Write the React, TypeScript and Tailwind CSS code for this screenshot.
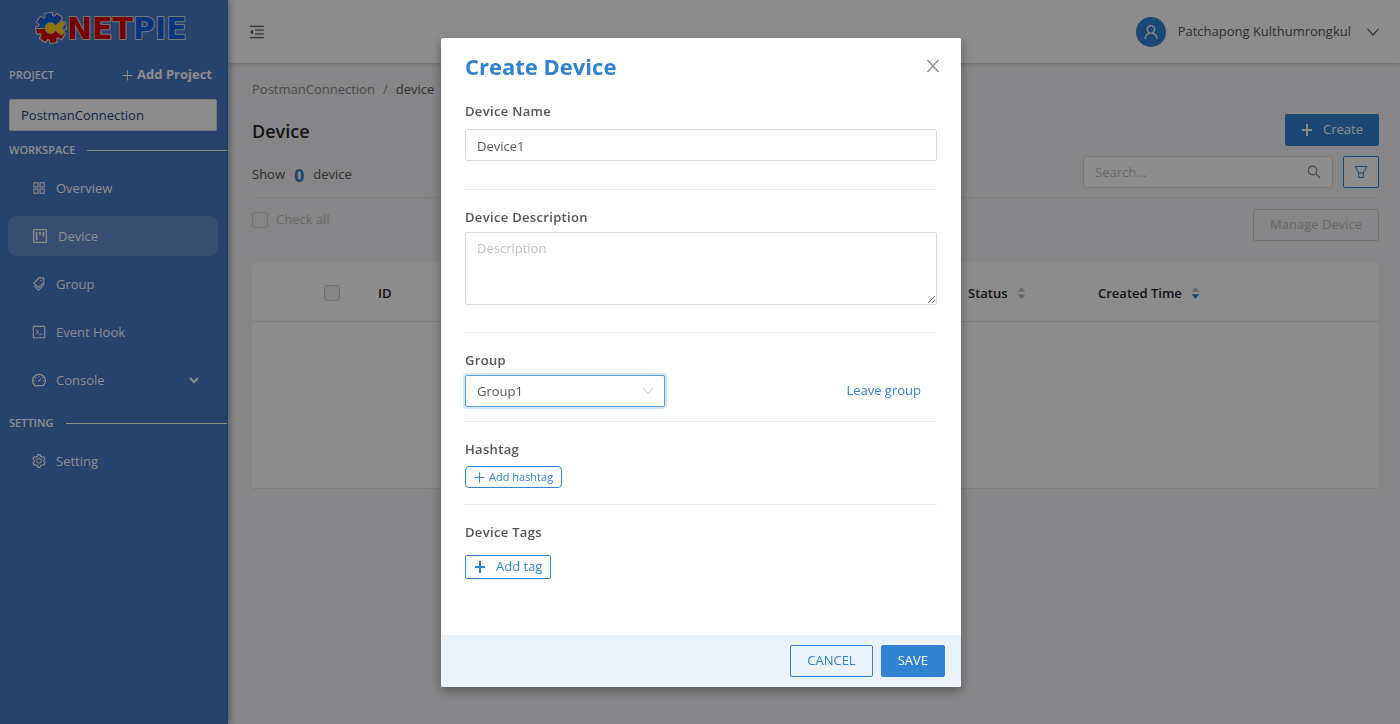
import React from "react";
import {
  AiOutlineAppstore,
  AiOutlineProject,
  AiOutlineTags,
  AiOutlineCode,
  AiOutlineDashboard,
  AiOutlineSetting,
  AiOutlineMenuFold,
  AiOutlineUser,
  AiFillCaretUp,
  AiFillCaretDown,
} from "react-icons/ai";

function BoldPlus() {
  return (
    <svg width="12" height="12" viewBox="0 0 12 12" fill="none" stroke="currentColor" strokeWidth="2" aria-hidden="true">
      <path d="M6 0v12M1 6h10" />
    </svg>
  );
}

function ThinPlus() {
  return (
    <svg width="11" height="11" viewBox="0 0 11 11" fill="none" stroke="currentColor" aria-hidden="true">
      <path d="M5.5 0.5v10M0.5 5.5h10" />
    </svg>
  );
}

function ChevronDown({ className }: { className?: string }) {
  return (
    <svg width="12" height="8" viewBox="0 0 12 8" fill="none" stroke="currentColor" strokeWidth="1.2" aria-hidden="true" className={className}>
      <path d="M0.5 0.8L6 7l5.5-6.2" />
    </svg>
  );
}

function CloseIcon() {
  return (
    <svg width="14" height="14" viewBox="0 0 14 14" fill="none" stroke="currentColor" strokeWidth="1.4" aria-hidden="true">
      <path d="M1.5 1l11 12M12.5 1l-11 12" />
    </svg>
  );
}

function SearchIcon() {
  return (
    <svg width="14" height="14" viewBox="0 0 14 14" fill="none" stroke="currentColor" strokeWidth="1.2" aria-hidden="true">
      <circle cx="5.5" cy="5.5" r="4.3" />
      <path d="M8.7 8.7L13 13" />
    </svg>
  );
}

function FilterIcon() {
  return (
    <svg width="14" height="14" viewBox="0 0 14 14" fill="none" stroke="currentColor" strokeLinejoin="round" aria-hidden="true">
      <path d="M1 1.5h12L9.3 8H4.7zM4.7 8v4.5h4.6V8" />
    </svg>
  );
}

const TEETH = 8;
const gearPath =
  Array.from({ length: TEETH }, (_, i) => {
    const at = (deg: number, r: number) => {
      const a = ((i * 360) / TEETH + deg - 10) * (Math.PI / 180);
      return `${(51 + r * Math.cos(a)).toFixed(2)} ${(28 + r * Math.sin(a)).toFixed(2)}`;
    };
    return `${i === 0 ? "M" : "L"}${at(-17, 11.5)}L${at(-12, 15)}L${at(12, 15)}L${at(17, 11.5)}`;
  }).join("") + "Z";

function Logo() {
  return (
    <svg width="160" height="36" viewBox="32 10 160 36" role="img" aria-label="NETPIE">
      <defs>
        <clipPath id="gear-top">
          <rect x="32" y="10" width="36" height="18" />
        </clipPath>
        <clipPath id="gear-shape">
          <path d={gearPath} />
        </clipPath>
      </defs>
      <path d={gearPath} fill="#d80000" stroke="#dcdcdc" strokeWidth="2.4" strokeLinejoin="round" />
      <path d={gearPath} fill="#d80000" />
      <path d={gearPath} fill="#0f62e0" clipPath="url(#gear-top)" />
      <path d="M36 28.5h8" stroke="#dcdcdc" strokeWidth="1.2" />
      <g clipPath="url(#gear-shape)">
        <path d="M56 28L62 22h6v12h-6z" fill="#4a78c8" />
      </g>
      <path
        d="M55.5 25.5L61 20.5l4 3-3 4.5 3 4.5-4 3-5.500-5a5.600 5.600 0 1 1 0-5z"
        fill="#ffd200"
        stroke="#dcdcdc"
        strokeWidth="0.6"
      />
      <text
        x="67"
        y="39"
        fontFamily="'DejaVu Sans', sans-serif"
        fontWeight="700"
        fontSize="30"
        stroke="#dcdcdc"
        strokeWidth="2"
        strokeLinejoin="round"
        paintOrder="stroke"
      >
        <tspan fill="#d80000">NET</tspan>
        <tspan fill="#0f62e0">PIE</tspan>
      </text>
    </svg>
  );
}

function SectionLabel({ children }: { children: string }) {
  return (
    <div className="flex h-5 items-center gap-3 pr-px pl-[9px] text-[11px] font-semibold text-white">
      <span>{children}</span>
      <span className="h-px flex-1 bg-white" />
    </div>
  );
}

type NavProps = { icon: React.ReactNode; label: string; active?: boolean; expandable?: boolean };

function NavItem({ icon, label, active, expandable }: NavProps) {
  return (
    <a
      href="#"
      className={
        active
          ? "mr-2.5 ml-2 flex h-10 items-center gap-[9px] rounded-lg bg-white/15 px-[23px] text-[13px] text-white"
          : "mr-2.5 ml-2 flex h-10 items-center gap-[9px] rounded-lg px-[23px] text-[13px] text-white"
      }
    >
      {icon}
      <span className="flex-1 pt-0.5">{label}</span>
      {expandable && (
        <svg width="10" height="8" viewBox="0 0 10 8" fill="none" stroke="currentColor" strokeWidth="2" aria-hidden="true" className="-mr-1">
          <path d="M1 2l4 4 4-4" />
        </svg>
      )}
    </a>
  );
}

function Sidebar() {
  return (
    <aside className="z-10 flex w-[228px] shrink-0 flex-col bg-[#4a78c8] shadow-[2px_0_6px_rgba(0,21,41,0.35)]">
      <div className="flex justify-center pt-2.5 pr-1">
        <Logo />
      </div>
      <div className="mt-[17px] flex h-6 items-center justify-between pr-4 pl-[9px] text-white">
        <span className="text-[11px] font-semibold">PROJECT</span>
        <button className="flex items-center gap-1 text-[13px] font-bold">
          <ThinPlus />
          Add Project
        </button>
      </div>
      <div className="mt-3 pr-[11px] pl-[9px]">
        <input
          aria-label="Project"
          defaultValue="PostmanConnection"
          className="h-8 w-full rounded-xs border border-[#d9d9d9] bg-white px-[11px] text-[13px] text-[#174a8c]"
        />
      </div>
      <div className="mt-[9px]">
        <SectionLabel>WORKSPACE</SectionLabel>
      </div>
      <nav className="mt-2 flex flex-col gap-2">
        <NavItem icon={<AiOutlineAppstore size={16} />} label="Overview" />
        <NavItem icon={<AiOutlineProject size={18} />} label="Device" active />
        <NavItem icon={<AiOutlineTags size={16} />} label="Group" />
        <NavItem icon={<AiOutlineCode size={16} />} label="Event Hook" />
        <NavItem icon={<AiOutlineDashboard size={16} />} label="Console" expandable />
      </nav>
      <div className="mt-[13px]">
        <SectionLabel>SETTING</SectionLabel>
      </div>
      <nav className="mt-2">
        <NavItem icon={<AiOutlineSetting size={16} />} label="Setting" />
      </nav>
    </aside>
  );
}

function TopBar() {
  return (
    <header className="flex h-[63px] shrink-0 items-center justify-between bg-white pr-[21px] pl-5 text-[#595959] shadow-[0_1px_4px_rgba(0,21,41,0.2)]">
      <button aria-label="Collapse menu">
        <AiOutlineMenuFold size={18} />
      </button>
      <button className="flex items-center gap-3 text-[13px]">
        <span className="flex size-[30px] items-center justify-center rounded-full bg-[#3182d1] text-white">
          <AiOutlineUser size={18} />
        </span>
        <span>Patchapong Kulthumrongkul</span>
        <ChevronDown className="ml-1" />
      </button>
    </header>
  );
}

function Sorter({ down }: { down?: boolean }) {
  return (
    <span className="flex flex-col text-[#bfbfbf]">
      <AiFillCaretUp size={11} className="-mb-1" />
      <AiFillCaretDown size={11} className={down ? "text-[#3182d1]" : ""} />
    </span>
  );
}

function DeviceTable() {
  return (
    <table className="mt-[21px] w-full table-fixed border-collapse text-left text-[13px] font-semibold text-[#262626]">
      <thead>
        <tr className="h-[59px] border-b border-[#e4e4e4]">
          <th className="w-[116px] rounded-tl-lg bg-white pt-1 pl-[72px]">
            <input
              type="checkbox"
              aria-label="Select all rows"
              className="block size-4 appearance-none rounded-[3px] border border-[#d0d0d0] bg-[#f5f5f5]"
            />
          </th>
          <th className="bg-white pt-1 pl-2.5 font-semibold">ID</th>
          <th className="w-[130px] bg-white pt-1 font-semibold">
            <span className="flex items-center gap-2">
              Status <Sorter />
            </span>
          </th>
          <th className="w-[281px] rounded-tr-lg bg-white pt-1 font-semibold">
            <span className="flex items-center gap-2">
              Created Time <Sorter down />
            </span>
          </th>
        </tr>
      </thead>
      <tbody>
        <tr className="h-[167px] border-b border-[#e4e4e4] bg-white">
          <td colSpan={4} />
        </tr>
      </tbody>
    </table>
  );
}

function DevicePage() {
  return (
    <main className="flex-1 pt-[17px] pr-[21px] pl-6 text-[13px] text-[#595959]">
      <nav aria-label="Breadcrumb" className="flex h-5 items-center gap-2 text-[#8c8c8c]">
        <a href="#">PostmanConnection</a>
        <span>/</span>
        <span className="text-[#595959]">device</span>
      </nav>
      <div className="mt-3.5 flex h-8 items-center justify-between">
        <h1 className="pt-0.5 text-lg font-semibold text-[#262626]">Device</h1>
        <button className="flex h-8 items-center gap-2.5 rounded-xs bg-[#3182d1] px-4 text-white">
          <BoldPlus />
          Create
        </button>
      </div>
      <div className="mt-2.5 flex h-[42px] items-start justify-between border-b border-[#e4e4e4]">
        <p className="flex h-9 items-center gap-[9px] pt-0.5">
          Show <b className="text-lg leading-5 text-[#3182d1]">0</b> device
        </p>
        <div className="flex gap-2.5">
          <label className="flex h-8 w-[250px] items-center rounded-xs border border-[#d9d9d9] bg-white px-[11px] text-[#8c8c8c]">
            <input aria-label="Search" placeholder="Search..." className="min-w-0 flex-1 pt-0.5 outline-none placeholder:text-[#bfbfbf]" />
            <SearchIcon />
          </label>
          <button aria-label="Filter" className="flex h-8 w-9 items-center justify-center rounded-xs border border-[#3182d1] bg-white text-[#3182d1]">
            <FilterIcon />
          </button>
        </div>
      </div>
      <div className="mt-[11px] flex items-start justify-between">
        <label className="mt-px flex h-5 items-center gap-2 text-[#bfbfbf]">
          <input type="checkbox" className="size-4 appearance-none rounded-[3px] border border-[#d0d0d0]" />
          Check all
        </label>
        <button disabled className="h-8 rounded-xs border border-[#d0d0d0] px-4 text-[#bfbfbf]">
          Manage Device
        </button>
      </div>
      <DeviceTable />
    </main>
  );
}

const fieldTitle = "block h-[22px] text-[13px] leading-[22px] font-semibold tracking-wide text-[#545454]";

function CreateDeviceDialog() {
  return (
    <div className="fixed inset-0 z-20 flex items-start justify-center bg-black/45 pt-[38px]">
      <div
        role="dialog"
        aria-labelledby="dialog-title"
        className="ml-[2px] w-[520px] overflow-hidden rounded-xs bg-white text-[13px] text-[#595959] shadow-[0_4px_12px_rgba(0,0,0,0.35)]"
      >
        <form className="px-6 pt-[13px] pb-14" onSubmit={(e) => e.preventDefault()}>
          <div className="flex h-[30px] items-center justify-between">
            <h2 id="dialog-title" className="text-[22px] font-bold text-[#3182d1]">
              Create Device
            </h2>
            <button type="button" aria-label="Close" className="-mr-[3px] text-[#8c8c8c]">
              <CloseIcon />
            </button>
          </div>
          <div className="mt-[19px] border-b border-[#e8e8e8] pb-7">
            <label htmlFor="device-name" className={fieldTitle}>Device Name</label>
            <input
              id="device-name"
              defaultValue="Device1"
              className="mt-[7px] block h-8 w-full rounded-xs border border-[#d9d9d9] px-[11px] pt-0.5"
            />
          </div>
          <div className="border-b border-[#e8e8e8] pt-4 pb-[27px]">
            <label htmlFor="device-description" className={fieldTitle}>Device Description</label>
            <textarea
              id="device-description"
              placeholder="Description"
              className="mt-1 block h-[73px] w-full rounded-xs border border-[#d9d9d9] px-[11px] py-1 leading-[22px] placeholder:text-[#bfbfbf]"
            />
          </div>
          <div className="border-b border-[#e8e8e8] pt-4 pb-3.5">
            <label htmlFor="device-group" className={fieldTitle}>Group</label>
            <div className="mt-1 flex items-center justify-between pr-4">
              <div className="relative">
                <select
                  id="device-group"
                  className="block h-8 w-[200px] appearance-none rounded-xs border border-[#5a9fdd] bg-white px-[11px] pt-0.5 shadow-[0_0_0_2px_rgba(49,130,209,0.2)] outline-none"
                >
                  <option>Group1</option>
                </select>
                <ChevronDown className="pointer-events-none absolute top-3 right-3 w-2.5 text-[#bfbfbf]" />
              </div>
              <button type="button" className="text-[#3182d1]">Leave group</button>
            </div>
          </div>
          <div className="border-b border-[#e8e8e8] pt-4 pb-4">
            <span className={fieldTitle}>Hashtag</span>
            <button type="button" className="mt-[6px] flex h-[22px] items-center gap-1 rounded border border-[#3182d1] px-2 text-[11px] text-[#3182d1]">
              <ThinPlus />
              Add hashtag
            </button>
          </div>
          <div className="pt-4">
            <span className={fieldTitle}>Device Tags</span>
            <button type="button" className="mt-3 flex h-6 items-center gap-2.5 rounded-xs border border-[#3182d1] px-2 text-[13px] text-[#3182d1]">
              <BoldPlus />
              Add tag
            </button>
          </div>
        </form>
        <footer className="flex justify-end gap-2 bg-[#eaf2fa] px-4 py-2.5">
          <button className="h-8 rounded-xs border border-[#3182d1] px-4 text-[#3182d1]">CANCEL</button>
          <button className="h-8 rounded-xs border border-[#3182d1] bg-[#3182d1] px-4 text-white">SAVE</button>
        </footer>
      </div>
    </div>
  );
}

export default function App() {
  return (
    <div className="flex min-h-screen bg-[#f4f4f7] font-['Open_Sans',sans-serif]">
      <Sidebar />
      <div className="flex min-w-0 flex-1 flex-col">
        <TopBar />
        <DevicePage />
      </div>
      <CreateDeviceDialog />
    </div>
  );
}
